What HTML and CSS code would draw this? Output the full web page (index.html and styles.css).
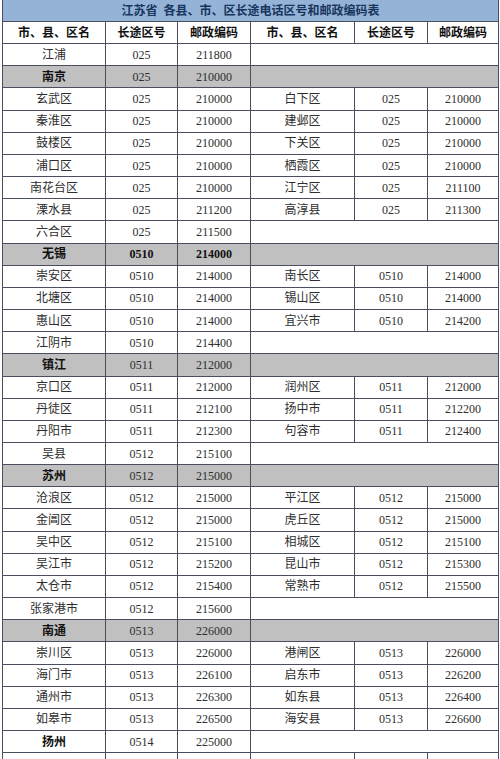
FILE: index.html
```html
<!DOCTYPE html>
<html lang="zh">
<head>
<meta charset="utf-8">
<title>江苏省 各县、市、区长途电话区号和邮政编码表</title>
<link rel="stylesheet" href="styles.css">
</head>
<body>
<table class="codes">
<colgroup>
<col class="c-name"><col class="c-area"><col class="c-zip">
<col class="c-name2"><col class="c-area2"><col class="c-zip2">
</colgroup>
<tbody>
<tr class="title"><td colspan="6">江苏省&nbsp;&nbsp;各县、市、区长途电话区号和邮政编码表</td></tr>
<tr class="head"><td>市、县、区名</td><td>长途区号</td><td>邮政编码</td><td>市、县、区名</td><td>长途区号</td><td>邮政编码</td></tr>
<tr><td>江浦</td><td>025</td><td>211800</td><td colspan="3"></td></tr>
<tr class="city"><td class="b">南京</td><td>025</td><td>210000</td><td colspan="3"></td></tr>
<tr><td>玄武区</td><td>025</td><td>210000</td><td>白下区</td><td>025</td><td>210000</td></tr>
<tr><td>秦淮区</td><td>025</td><td>210000</td><td>建邺区</td><td>025</td><td>210000</td></tr>
<tr><td>鼓楼区</td><td>025</td><td>210000</td><td>下关区</td><td>025</td><td>210000</td></tr>
<tr><td>浦口区</td><td>025</td><td>210000</td><td>栖霞区</td><td>025</td><td>210000</td></tr>
<tr><td>南花台区</td><td>025</td><td>210000</td><td>江宁区</td><td>025</td><td>211100</td></tr>
<tr><td>溧水县</td><td>025</td><td>211200</td><td>高淳县</td><td>025</td><td>211300</td></tr>
<tr><td>六合区</td><td>025</td><td>211500</td><td colspan="3"></td></tr>
<tr class="city"><td class="b">无锡</td><td class="b">0510</td><td class="b">214000</td><td colspan="3"></td></tr>
<tr><td>崇安区</td><td>0510</td><td>214000</td><td>南长区</td><td>0510</td><td>214000</td></tr>
<tr><td>北塘区</td><td>0510</td><td>214000</td><td>锡山区</td><td>0510</td><td>214000</td></tr>
<tr><td>惠山区</td><td>0510</td><td>214000</td><td>宜兴市</td><td>0510</td><td>214200</td></tr>
<tr><td>江阴市</td><td>0510</td><td>214400</td><td colspan="3"></td></tr>
<tr class="city"><td class="b">镇江</td><td>0511</td><td>212000</td><td colspan="3"></td></tr>
<tr><td>京口区</td><td>0511</td><td>212000</td><td>润州区</td><td>0511</td><td>212000</td></tr>
<tr><td>丹徒区</td><td>0511</td><td>212100</td><td>扬中市</td><td>0511</td><td>212200</td></tr>
<tr><td>丹阳市</td><td>0511</td><td>212300</td><td>句容市</td><td>0511</td><td>212400</td></tr>
<tr><td>吴县</td><td>0512</td><td>215100</td><td colspan="3"></td></tr>
<tr class="city"><td class="b">苏州</td><td>0512</td><td>215000</td><td colspan="3"></td></tr>
<tr><td>沧浪区</td><td>0512</td><td>215000</td><td>平江区</td><td>0512</td><td>215000</td></tr>
<tr><td>金阊区</td><td>0512</td><td>215000</td><td>虎丘区</td><td>0512</td><td>215000</td></tr>
<tr><td>吴中区</td><td>0512</td><td>215100</td><td>相城区</td><td>0512</td><td>215100</td></tr>
<tr><td>吴江市</td><td>0512</td><td>215200</td><td>昆山市</td><td>0512</td><td>215300</td></tr>
<tr><td>太仓市</td><td>0512</td><td>215400</td><td>常熟市</td><td>0512</td><td>215500</td></tr>
<tr><td>张家港市</td><td>0512</td><td>215600</td><td colspan="3"></td></tr>
<tr class="city"><td class="b">南通</td><td>0513</td><td>226000</td><td colspan="3"></td></tr>
<tr><td>崇川区</td><td>0513</td><td>226000</td><td>港闸区</td><td>0513</td><td>226000</td></tr>
<tr><td>海门市</td><td>0513</td><td>226100</td><td>启东市</td><td>0513</td><td>226200</td></tr>
<tr><td>通州市</td><td>0513</td><td>226300</td><td>如东县</td><td>0513</td><td>226400</td></tr>
<tr><td>如皋市</td><td>0513</td><td>226500</td><td>海安县</td><td>0513</td><td>226600</td></tr>
<tr><td class="b">扬州</td><td>0514</td><td>225000</td><td colspan="3"></td></tr>
<tr><td></td><td></td><td></td><td></td><td></td><td></td></tr>
</tbody>
</table>
</body>
</html>
```
FILE: styles.css
```css
html, body {
  margin: 0;
  padding: 0;
  background: #ffffff;
}
body {
  padding: 0 2px;
  font-family: "Liberation Serif", "Noto Sans CJK SC", serif;
  color: #2e2e2e;
}
.codes {
  width: 496px;
  border-collapse: collapse;
  table-layout: fixed;
  font-size: 12px;
}
.c-name { width: 103px; }
.c-area { width: 72px; }
.c-zip { width: 73px; }
.c-name2 { width: 104px; }
.c-area2 { width: 73px; }
.c-zip2 { width: 71px; }
.codes td {
  border: 1px solid #4a4e5e;
  height: 21.17px;
  padding: 0;
  text-align: center;
  vertical-align: middle;
  line-height: 14px;
  white-space: nowrap;
  overflow: hidden;
}
.codes .title td {
  background: #95b3d7;
  color: #17365d;
  font-weight: bold;
  height: 21px;
  border-top: none;
}
.codes .head td {
  font-weight: bold;
  color: #111;
}
.codes .city td {
  background: #c0c0c0;
}
.codes td.b {
  font-weight: bold;
  color: #111;
}
```
